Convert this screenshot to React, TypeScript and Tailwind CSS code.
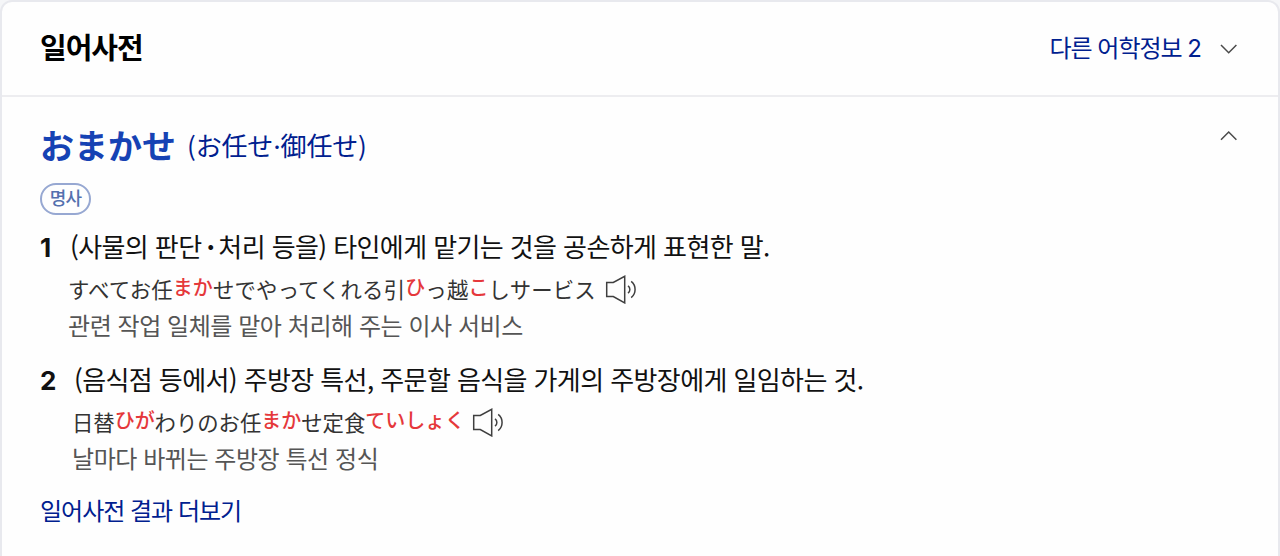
import React from 'react';

interface Segment {
  text: string;
  reading?: boolean;
}

interface Meaning {
  no: number;
  definition: React.ReactNode;
  example: Segment[];
  translation: string;
  textClass: string;
  exampleClass: string;
  iconClass: string;
}

const meanings: Meaning[] = [
  {
    no: 1,
    definition: (
      <>
        (사물의 판단<span className="mr-1 ml-[5px] font-bold">·</span>처리 등을) 타인에게 맡기는 것을 공손하게 표현한 말.
      </>
    ),
    example: [
      { text: 'すべてお任' },
      { text: 'まか', reading: true },
      { text: 'せでやってくれる引' },
      { text: 'ひ', reading: true },
      { text: 'っ越' },
      { text: 'こ', reading: true },
      { text: 'しサービス' },
    ],
    translation: '관련 작업 일체를 맡아 처리해 주는 이사 서비스',
    textClass: 'ml-[29px]',
    exampleClass: 'pl-7 tracking-[0.15px]',
    iconClass: 'ml-[9px]',
  },
  {
    no: 2,
    definition: '(음식점 등에서) 주방장 특선, 주문할 음식을 가게의 주방장에게 일임하는 것.',
    example: [
      { text: '日替' },
      { text: 'ひが', reading: true },
      { text: 'わりのお任' },
      { text: 'まか', reading: true },
      { text: 'せ定食' },
      { text: 'ていしょく', reading: true },
    ],
    translation: '날마다 바뀌는 주방장 특선 정식',
    textClass: 'ml-[33px]',
    exampleClass: 'pl-8 tracking-[-0.05px]',
    iconClass: 'ml-[7px]',
  },
];

const Chevron: React.FC<{ up?: boolean }> = ({ up }) => (
  <svg width="18" height="12" viewBox="0 0 18 12" fill="none" stroke="#4a4a4a" strokeWidth="1.5">
    <path d={up ? 'M1 9.8 8.7 2l7.7 7.8' : 'M1 2 8.7 9.8 16.4 2'} />
  </svg>
);

const SpeakerIcon: React.FC<{ className: string }> = ({ className }) => (
  <svg
    className={`shrink-0 ${className}`}
    width="34"
    height="30"
    viewBox="0 0 34 30"
    fill="none"
    stroke="#3f3f3f"
    strokeWidth="1.5"
  >
    <path d="M1.7 8.5h6.6l11.4-6.2v26.6L8.3 22.5H1.7z" />
    <path d="M23 11.9a4.4 4.4 0 0 1 0 7.2M26.2 7.4a10.4 10.4 0 0 1 0 16.2" />
  </svg>
);

const MeaningItem: React.FC<{ item: Meaning }> = ({ item }) => (
  <li className="h-[133px]">
    <div className="flex h-8 items-center whitespace-nowrap text-[#111]">
      <span className="w-px font-['Inter'] text-[26px] font-bold">{item.no}</span>
      <span className={`pb-[3px] text-[26px] tracking-[-0.6px] ${item.textClass}`}>{item.definition}</span>
    </div>
    <div
      lang="ja"
      className={`mt-[11px] flex h-[30px] items-center whitespace-nowrap font-['Noto_Sans_CJK_JP',sans-serif] text-[21.4px] text-[#333] ${item.exampleClass}`}
    >
      <span>
        {item.example.map((seg, i) =>
          seg.reading ? (
            <span key={i} className="relative top-[-3px] text-[20px] font-medium text-[#e5383b]">
              {seg.text}
            </span>
          ) : (
            <span key={i}>{seg.text}</span>
          ),
        )}
      </span>
      <SpeakerIcon className={item.iconClass} />
    </div>
    <div className={`mt-1.5 ${item.exampleClass}`}>
      <p className="flex h-[30px] items-center whitespace-nowrap text-[24px] tracking-[-0.45px] text-[#555]">
        {item.translation}
      </p>
    </div>
  </li>
);

const App: React.FC = () => {
  return (
    <div className="h-[556px] overflow-hidden bg-[#f5f6f8] font-['Noto_Sans_CJK_KR',sans-serif]">
      <section lang="ko" className="h-[580px] rounded-xl border-2 border-[#e8e9ee] bg-[#fefefe]">
        <header className="flex h-[95px] items-center justify-between border-b-2 border-[#ededf0] pr-10 pl-[38px]">
          <h2 className="pb-1 text-[29px] font-bold tracking-[-1px] text-black">일어사전</h2>
          <a href="#" className="flex items-center text-[24px] tracking-[-1px] text-[#00208f]">
            <span className="mr-[19px] pb-px">
              다른 어학정보 <span className="font-['Inter']">2</span>
            </span>
            <Chevron />
          </a>
        </header>

        <div className="pt-[29px] pr-10 pl-[38px]">
          <div className="flex h-10 items-center text-[#00208f]">
            <strong lang="ja" className="pb-[3px] font-['Noto_Sans_CJK_JP',sans-serif] text-[34px] font-bold text-[#1642b4]">
              おまかせ
            </strong>
            <span
              lang="ja"
              className="ml-[11px] pb-px font-['Noto_Sans_CJK_JP',sans-serif] text-[26px] tracking-[-0.15px]"
            >
              (お任せ<span className="font-['Inter']">·</span>御任せ)
            </span>
            <button className="mb-[21px] ml-auto">
              <Chevron up />
            </button>
          </div>

          <span className="mt-[17px] flex h-8 w-[51px] items-center justify-center rounded-full border-2 border-[#97a8d2] pb-[3px] text-[18px] font-medium tracking-[-0.8px] text-[#5470ae]">
            명사
          </span>

          <ol className="mt-4">
            {meanings.map((item) => (
              <MeaningItem key={item.no} item={item} />
            ))}
          </ol>

          <a href="#" className="flex h-8 items-center pb-1.5 text-[24px] tracking-[-1px] text-[#00208f]">
            일어사전 결과 더보기
          </a>
        </div>
      </section>
    </div>
  );
};

export default App;
